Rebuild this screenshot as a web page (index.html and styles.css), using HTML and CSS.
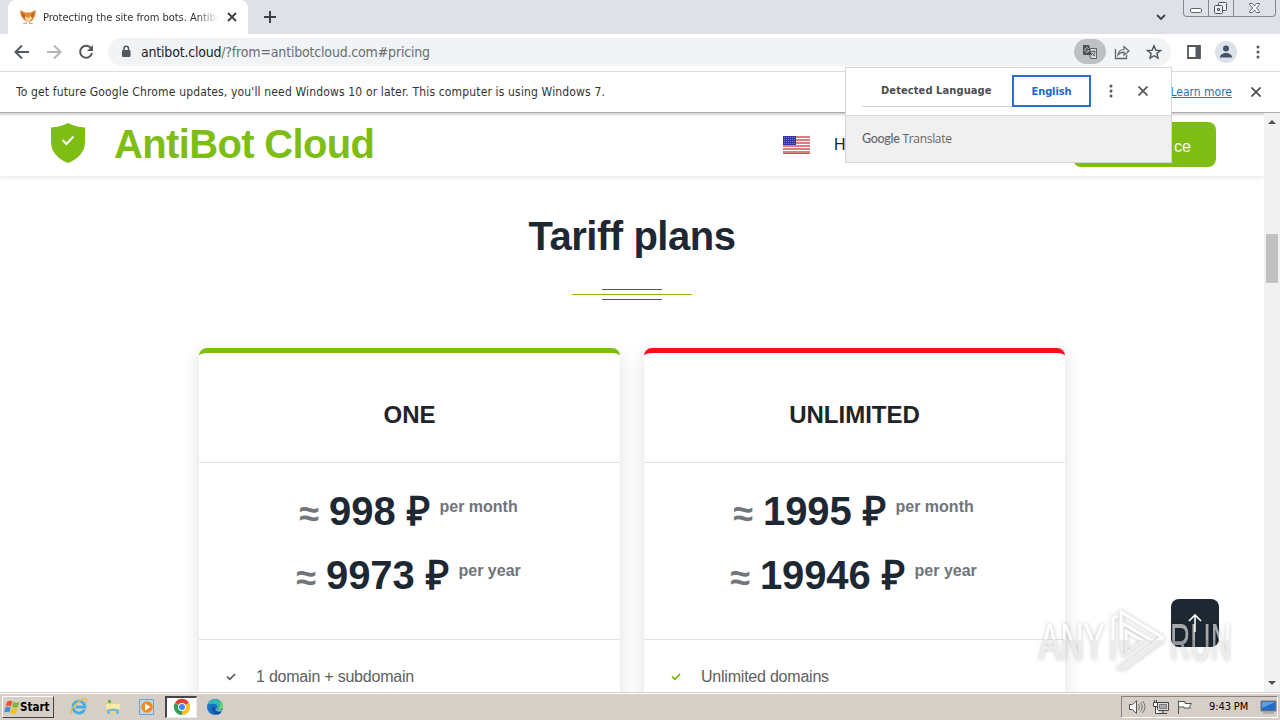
FILE: index.html
```
<!DOCTYPE html>
<html lang="en">
<head>
	<meta charset="UTF-8">
	<meta name="viewport" content="width=device-width, initial-scale=1.0">
	<title>Protecting the site from bots. Antibot Cloud</title>
	<link rel="stylesheet" href="styles.css">
</head>
<body>
	<div class="tab-strip">
		<div class="tab">
			<svg class="favicon" width="16" height="16" viewBox="0 0 16 16">
				<path d="M0 1l5 2.500h5L16 1l-1 6-3 5-4 1-4-2-3-4z" fill="#e5892f"/>
				<path d="M1 2l4 4 2 3-2 1-3-3zM15 2l-4 4-1 4 3-2z" fill="#b5642c"/>
				<path d="M5 7l3 2 3-2 1 3-4 3-3-3z" fill="#ffdc9c"/>
				<path d="M2 15l5-2v2zM9 13l5 2H9z" fill="#b8a9c6"/>
			</svg>
			<span class="tab-title">Protecting the site from bots. Antibo</span>
			<svg class="tab-close" width="10" height="10" viewBox="0 0 10 10"><path d="M1 1l8 8M9 1L1 9" stroke="#3c4043" stroke-width="1.8"/></svg>
		</div>
		<svg class="new-tab" width="12" height="12" viewBox="0 0 12 12"><path d="M6 0v12M0 6h12" stroke="#3c4043" stroke-width="2"/></svg>
		<svg class="tab-search" width="10" height="7" viewBox="0 0 10 7"><path d="M1 1l4 4 4-4" fill="none" stroke="#3c4043" stroke-width="1.8"/></svg>
		<div class="window-buttons">
			<span class="win-btn"><svg width="24" height="16" viewBox="0 0 24 16"><rect x="6.500" y="8.500" width="11" height="4" rx="1" fill="#fff" stroke="#5d636b"/></svg></span>
			<span class="win-btn"><svg width="24" height="16" viewBox="0 0 24 16"><g fill="#eef0f3" stroke="#4d535b"><rect x="9.500" y="2.500" width="8" height="8" rx="1"/><rect x="5.500" y="5.500" width="8" height="8" rx="1"/><path d="M8.500 8.500h2v2h-2z"/></g></svg></span>
			<span class="win-btn win-close"><svg width="41" height="16" viewBox="0 0 41 16"><path d="M15.500 3.500h3l2 2.500 2-2.500h3v1l-3 3.500 3 3.500v1h-3l-2-2.500-2 2.500h-3v-1l3-3.500-3-3.500z" fill="#fff" stroke="#5d636b"/></svg></span>
		</div>
	</div>

	<div class="toolbar">
		<svg class="nav-icon" width="16" height="16" viewBox="0 0 16 16"><path d="M15 8H2M8 1.500L1.500 8 8 14.500" fill="none" stroke="#55585c" stroke-width="2"/></svg>
		<svg class="nav-icon" width="16" height="16" viewBox="0 0 16 16"><path d="M1 8h13M8 1.500L14.500 8 8 14.500" fill="none" stroke="#b4b7ba" stroke-width="2"/></svg>
		<svg class="nav-icon" width="16" height="16" viewBox="0 0 16 16"><path d="M13 4.200A6 6 0 1 0 14 9" fill="none" stroke="#55585c" stroke-width="2"/><path d="M15 1v6H9z" fill="#55585c"/></svg>
		<div class="omnibox">
			<svg class="lock" width="10" height="13" viewBox="0 0 10 13"><rect x="1" y="5" width="8.500" height="7" rx="1" fill="#55585c"/><path d="M3 5.500V3.500a2.200 2.200 0 0 1 4.500 0v2" fill="none" stroke="#55585c" stroke-width="1.500"/></svg>
			<span class="url"><b class="url-host">antibot.cloud</b><span class="url-path">/?from=antibotcloud.com#pricing</span></span>
			<span class="translate-chip">
				<svg width="16" height="16" viewBox="0 0 16 16"><path d="M6.500 4.500h8v10h-6z" fill="#d2d4d5" stroke="#5f6368"/><path d="M1 1h6l3 10H2a1 1 0 0 1-1-1z" fill="#4d5155"/><path d="M6.800 4.700a2.200 2.200 0 1 0 .3 2H5.200" fill="none" stroke="#bbb"/><path d="M9.500 7.500h4M11.500 6.500v1M13 8q-1 3-2.500 4M10 9l3 3" fill="none" stroke="#5f6368"/></svg>
			</span>
			<svg class="share" width="16" height="16" viewBox="0 0 16 16"><path d="M1.500 5v9.500h11V11" fill="none" stroke="#5f6368" stroke-width="1.300"/><path d="M4 11c.5-4 2.800-5.500 6-5.500V2.500L15 7l-5 4V8.200C7.500 8.200 5.500 9 4 11z" fill="none" stroke="#5f6368" stroke-width="1.200"/></svg>
			<svg class="star" width="16" height="16" viewBox="0 0 16 16"><path d="M8 1.800l1.800 4.300 4.700.4-3.600 3 1.100 4.600L8 11.700l-4 2.400 1.100-4.600-3.600-3 4.700-.4z" fill="none" stroke="#4d5155" stroke-width="1.400"/></svg>
		</div>
		<svg class="side-panel" width="14" height="14" viewBox="0 0 14 14"><path d="M1 1h12v12H1z" fill="none" stroke="#55585c" stroke-width="1.800"/><path d="M8.500 1H13v12H8.500z" fill="#55585c"/></svg>
		<span class="avatar"><svg width="22" height="22" viewBox="0 0 22 22"><circle cx="11" cy="7.500" r="3" fill="#46506a"/><path d="M5 16.500c0-6 12-6 12 0z" fill="#46506a"/></svg></span>
		<svg class="menu-dots" width="4" height="14" viewBox="0 0 4 14"><g fill="#55585c"><circle cx="2" cy="2" r="1.500"/><circle cx="2" cy="7" r="1.500"/><circle cx="2" cy="12" r="1.500"/></g></svg>
	</div>

	<div class="infobar">
		<span class="infobar-text">To get future Google Chrome updates, you'll need Windows 10 or later. This computer is using Windows 7.</span>
		<a href="#" class="infobar-link">Learn more</a>
		<svg width="10" height="10" viewBox="0 0 10 10"><path d="M.5.500l9 9M9.500.500l-9 9" stroke="#4d5155" stroke-width="1.800"/></svg>
	</div>

	<div class="viewport">
		<div class="page">
			<div class="site-header">
				<svg class="shield" width="36" height="42" viewBox="0 0 36 42"><path d="M18 1c5 2.500 10 4 17 4.500v15C35 31 26 38 18 41 10 38 1 31 1 20.500v-15C8 5 13 3.500 18 1z" fill="#7ebd13"/><path d="M12.500 18l4 4 7-7.500" fill="none" stroke="#fff" stroke-width="2"/></svg>
				<span class="brand">AntiBot Cloud</span>
				<svg class="flag" width="27" height="18" viewBox="0 0 27 18"><path d="M0 0h27v18H0z" fill="#fff"/><path d="M0 1h27M0 4h27M0 7h27M0 10h27M0 13h27M0 16h27" stroke="#d95057" stroke-width="1.400"/><path d="M0 17.500h27" stroke="#d95057"/><path d="M0 0h13v9H0z" fill="#3333a5"/><path d="M1 1.500h12M1 3.500h12M1 5.500h12M1 7.500h12" stroke="#7878cc" stroke-dasharray="1 1"/></svg>
				<a href="#" class="nav-link">H</a>
				<a href="#" class="btn-service">ce</a>
			</div>
			<div class="pricing">
				<h2 class="section-title">Tariff plans</h2>
				<div class="title-line"><span></span><span></span><span></span></div>
				<div class="plans">
					<div class="plan">
						<h3 class="plan-name">ONE</h3>
						<div class="plan-prices">
							<div class="price"><span class="approx">≈</span><span class="amount">998 ₽</span><span class="period">per month</span></div>
							<div class="price"><span class="approx">≈</span><span class="amount">9973 ₽</span><span class="period">per year</span></div>
						</div>
						<ul class="plan-list">
							<li class="plan-item"><svg width="10" height="8" viewBox="0 0 10 8"><path d="M1 3.500L3.800 6.300 9 1" fill="none" stroke="#50575e" stroke-width="1.700"/></svg>1 domain + subdomain</li>
						</ul>
					</div>
					<div class="plan plan-red">
						<h3 class="plan-name">UNLIMITED</h3>
						<div class="plan-prices">
							<div class="price"><span class="approx">≈</span><span class="amount">1995 ₽</span><span class="period">per month</span></div>
							<div class="price"><span class="approx">≈</span><span class="amount">19946 ₽</span><span class="period">per year</span></div>
						</div>
						<ul class="plan-list">
							<li class="plan-item"><svg width="10" height="8" viewBox="0 0 10 8"><path d="M1 3.500L3.800 6.300 9 1" fill="none" stroke="#72b000" stroke-width="1.700"/></svg>Unlimited domains</li>
						</ul>
					</div>
				</div>
			</div>
		</div>
		<div class="scrollbar">
			<svg width="8" height="5" viewBox="0 0 8 5"><path d="M0 5l4-4 4 4z" fill="#505050"/></svg>
			<span class="scroll-thumb"></span>
			<svg class="scroll-down" width="8" height="5" viewBox="0 0 8 5"><path d="M0 0h8L4 4z" fill="#505050"/></svg>
		</div>
	</div>

	<div class="taskbar">
		<div class="start">
			<svg width="16" height="16" viewBox="0 0 16 16"><path d="M3 3q3-2 5.500-.5L7 7.500Q4.500 6 1.500 7.800z" fill="#e8562a"/><path d="M9.300 3q3 1.500 6 0L14 8q-3 1.500-6 0z" fill="#7cba35"/><path d="M1.200 8.800q3-1.800 5.500-.3L5.300 13.500Q3 12 0 13.500z" fill="#3f8ede"/><path d="M7.600 9q3 1.500 6 0l-1.500 5q-3 1.500-6 0z" fill="#f6bc1d"/></svg>
			<b>Start</b>
		</div>
		<div class="task"><svg width="18" height="18" viewBox="0 0 18 18"><path d="M14.500 11.500A6 6 0 1 1 15 9H6" fill="none" stroke="#42aee6" stroke-width="2.800"/><path d="M2 15Q-1 17 2 11 7 3 14 1q4-1 2 4" fill="none" stroke="#e8bb42" stroke-width="1.400"/></svg></div>
		<div class="task"><svg width="18" height="18" viewBox="0 0 18 18"><path d="M2 3h5l1 2h7v11H2z" fill="#edd27a"/><path d="M4 2h3v3H4z" fill="#5eb565"/><path d="M2 6h14v5H2z" fill="#fbeaa6"/><path d="M3 16v-4q6-3 12 0v4h-3v-3H6v3z" fill="#72b8e0"/></svg></div>
		<div class="task"><svg width="18" height="18" viewBox="0 0 18 18"><path d="M1.500 1.500h14v15h-14z" fill="#bcd8ee" stroke="#6ca2ce"/><circle cx="9" cy="9" r="5.800" fill="#f18a1c"/><path d="M7 5.500l5.500 3.500L7 12.500z" fill="#fff"/></svg></div>
		<div class="task task-active"><svg width="18" height="18" viewBox="0 0 18 18"><path d="M9 9L1.900 5A8 8 0 0 1 16 5z" fill="#e34133"/><path d="M9 9l7-4a8 8 0 0 1-7 12z" fill="#fbc116"/><path d="M9 9v8A8 8 0 0 1 1.900 5z" fill="#2fa14f"/><circle cx="9" cy="9" r="4" fill="#fff"/><circle cx="9" cy="9" r="3" fill="#4285f4"/></svg></div>
		<div class="task"><svg width="18" height="18" viewBox="0 0 18 18"><circle cx="9" cy="9" r="8" fill="#1673c7"/><path d="M1.500 7a8 8 0 0 1 15.500 1.500c0 4-5 4-6 2 1-1 1-4-2-4.500Q4 5 1.500 7z" fill="#35b9b4"/><path d="M14 3q3 2 3 5.500c0 3-3 3.500-5 3q3-3 2-8.500z" fill="#6cd35c"/><path d="M5.500 10q.5 5 6 6.500 3-.5 4.500-3-8 2-7.500-4.500-2-1-3 1z" fill="#174e9c"/><path d="M10.500 10c0 3 4 3 6 1.500-1 2-3 2-4.500 1.500-2-.6-2-2-1.500-3z" fill="#d6cfc7"/></svg></div>
		<div class="tray">
			<svg width="18" height="16" viewBox="0 0 18 16"><path d="M1.500 5.500h3l4-4v13l-4-4h-3z" fill="#fff" stroke="#555"/><path d="M10.500 5q2 3 0 6M12.500 3.500q3.500 4.500 0 9M14.500 2q5 6 0 12" fill="none" stroke="#777"/></svg>
			<svg width="18" height="16" viewBox="0 0 18 16"><path d="M5.500 3.500h11v8h-11zM8 14.500h7M11 12v2" fill="#ddd" stroke="#444"/><path d="M7.500 5.500h7v4h-7z" fill="#aaa" stroke="#777"/><path d="M1.500 3.500h4v4h-4zM2.500 1v2M4.500 1v2M3.500 8v6.500H8" fill="#fff" stroke="#444"/></svg>
			<svg width="18" height="16" viewBox="0 0 18 16"><path d="M2.500 15V1.500M3 2.500h6v2h6.500l-2 3 1 1.500H8V8H3" fill="#fff" stroke="#555"/></svg>
			<span class="clock">9:43 PM</span>
			<svg class="desktop-icon" width="17" height="14" viewBox="0 0 17 14"><path d="M1 1h15v10H1z" fill="#256cc8" stroke="#76797c"/><path d="M2 2h13L2 8z" fill="#5f9fe5"/><path d="M3 13h11" stroke="#8d8d8d"/></svg>
		</div>
	</div>

	<!-- translate popup, hangs over the toolbar and the page -->
	<div class="translate-popup">
		<div class="translate-tabs">
			<span class="lang">Detected Language</span>
			<span class="lang lang-active">English</span>
			<svg class="popup-dots" width="4" height="14" viewBox="0 0 4 14"><g fill="#55585c"><circle cx="2" cy="2" r="1.500"/><circle cx="2" cy="7" r="1.500"/><circle cx="2" cy="12" r="1.500"/></g></svg>
			<svg width="10" height="10" viewBox="0 0 10 10"><path d="M.5.500l9 9M9.500.500l-9 9" stroke="#55585c" stroke-width="1.800"/></svg>
		</div>
		<div class="translate-foot"><b>Google</b> Translate</div>
	</div>

	<a href="#" class="to-top"><svg width="14" height="20" viewBox="0 0 14 20"><path d="M7 19V2M1 8l6-6 6 6" fill="none" stroke="#fff" stroke-width="1.600"/></svg></a>

	<svg class="watermark" width="204" height="72" viewBox="0 0 204 72">
		<defs>
			<linearGradient id="fade" x1="0" y1="0" x2="0" y2="72" gradientUnits="userSpaceOnUse">
				<stop offset=".5" stop-color="#fff"/>
				<stop offset=".5" stop-color="#e2e2e2"/>
			</linearGradient>
		</defs>
		<text x="5" y="56" textLength="66" lengthAdjust="spacingAndGlyphs" fill="url(#fade)">ANY</text>
		<text x="136" y="56" textLength="61" lengthAdjust="spacingAndGlyphs" fill="url(#fade)">RUN</text>
		<path d="M79 56V14l5-2M87 44V8l41 25-41 30-4 2M128 33v4L88 66M88 48V19l31 18M92 47V27l17 10-21 15" fill="none" stroke="url(#fade)" stroke-width="3"/>
	</svg>
</body>
</html>
```
FILE: styles.css
```
*{ box-sizing: border-box;}
body{
	margin: 0; width: 1280px; height: 720px; overflow: hidden;
	display: flex; flex-direction: column; background: #fff; position: relative;
	font-family: "DejaVu Sans Condensed", "DejaVu Sans", sans-serif; font-size: 11px; color: #333;
}
svg{ display: block; flex: none;}
a{ text-decoration: none;}

/* browser */
.tab-strip{
	height: 34px; background: #dee1e8; display: flex; align-items: center; flex: none;
}
.tab{
	width: 240px; height: 34px; margin-left: 8px; padding-left: 12px; background: #fff;
	border-radius: 8px 8px 0 0; display: flex; align-items: center;
}
.tab-title{
	width: 175px; margin-left: 7px; overflow: hidden; white-space: nowrap; letter-spacing: -.02px;
	-webkit-mask-image: linear-gradient(to right, #000 88%, transparent);
	mask-image: linear-gradient(to right, #000 88%, transparent);
}
.tab-close{ margin-left: 9px;}
.new-tab{ margin-left: 16px;}
.tab-search{ margin-left: auto;}
.window-buttons{
	display: flex; align-self: flex-start; height: 17px; width: 93px; margin: 0 4px 0 17px;
	border: 1px solid #858a92; border-top: 0; border-radius: 0 0 4px 4px; overflow: hidden;
}
.win-btn{ width: 25px; border-right: 1px solid #858a92;}
.win-close{ width: 41px; border: 0;}
.toolbar{
	height: 38px; border-bottom: 1px solid #d9dadc; display: flex; align-items: center; flex: none;
	padding: 0 20px 2px 14px;
}
.nav-icon{ margin-right: 16px;}
.omnibox{
	width: 1063px; height: 28px; margin-left: -2px; padding: 0 9px 0 13px; border-radius: 14px; background: #f1f3f5;
	display: flex; align-items: center;
}
.url{ margin-left: 10px; font-size: 14px; white-space: nowrap;}
.url-host{ font-weight: normal; color: #202124; letter-spacing: -.2px;}
.url-path{ color: #6a6e73; letter-spacing: -.18px;}
.translate-chip{
	width: 32px; height: 25px; margin-left: auto; border-radius: 13px; background: #bdc1c1;
	display: flex; align-items: center; justify-content: center;
}
.share{ margin-left: 8px;}
.star{ margin-left: 16px;}
.side-panel{ margin-left: 16px;}
.avatar{ width: 22px; height: 22px; margin-left: 14px; border-radius: 50%; background: #dde1e8;}
.menu-dots{ margin-left: auto;}
.infobar{
	height: 41px; padding: 0 19px 1px 16px; display: flex; align-items: center; flex: none;
	border-bottom: 1px solid #a9abac;
}
.infobar-text{ font-size: 12px; letter-spacing: .15px; white-space: nowrap;}
.infobar-link{ margin: 0 19px 0 auto; font-size: 12px; color: #1a73c8; text-decoration: underline;}

/* site */
.viewport{
	flex: 1; min-height: 0; display: flex; overflow: hidden;
	box-shadow: inset 0 3px 2px -1px #d5d6d7;
}
.page{ width: 1264px; overflow: hidden; font-family: "Liberation Sans", Arial, sans-serif;}
.site-header{
	height: 63px; padding: 0 48px 0 50px; display: flex; align-items: center;
	box-shadow: 0 1px 5px rgba(0,0,0,.12);
}
.shield{ margin-bottom: 4px;}
.brand{ margin-left: 28px; font-size: 40px; font-weight: bold; color: #7ebd13; letter-spacing: -.65px;}
.flag{ margin: 0 0 0 auto;}
.nav-link{ width: 239px; margin: 0 0 0 24px; font-size: 16px; color: #222;}
.btn-service{
	width: 143px; height: 45px; padding-right: 25px; background: #7ebd13; border-radius: 8px;
	color: #fff; font-size: 16px; line-height: 50px; text-align: right;
}
.section-title{
	margin: 0; padding-top: 37px; font-size: 40px; line-height: 46px; text-align: center;
	color: #1e2832; letter-spacing: -.45px;
}
.title-line{ margin: 30px 0 48px; display: flex; flex-direction: column; align-items: center; gap: 4px;}
.title-line span{ width: 60px; height: 1px; background: #505763;}
.title-line span:nth-child(2){ width: 120px; background: #7ebd13;}
.plans{ display: flex; gap: 24px; justify-content: center;}
.plan{
	width: 421px; border-top: 5px solid #7ebd13; border-radius: 8px;
	background: #fff; box-shadow: 0 5px 18px rgba(0,0,0,.13);
}
.plan-red{ border-color: #fa0f17;}
.plan-name{
	height: 110px; margin: 0; padding-top: 14px; border-bottom: 1px solid #e1e2e3;
	font-size: 24px; line-height: 96px; text-align: center; color: #1e2428;
}
.plan-prices{ height: 177px; padding-top: 16px; border-bottom: 1px solid #e1e2e3;}
.price{ height: 64px; padding-right: 2px; display: flex; justify-content: center; line-height: 64px; font-weight: bold;}
.approx{ font-size: 36px; color: #727679; padding-top: 3px;}
.amount{ margin: 0 10px; font-size: 40px; color: #1e2832; letter-spacing: -.1px;}
.period{ font-size: 16px; line-height: 55px; color: #6d747b;}
.plan-list{ list-style: none; margin: 0; padding: 27px 0 60px 27px;}
.plan-item{ display: flex; align-items: center; gap: 20px; font-size: 16px; line-height: 20px; color: #5c6063; letter-spacing: -.22px;}
.scrollbar{
	width: 16px; background: #f1f1f1; display: flex; flex-direction: column; align-items: center; padding: 6px 0;
}
.scroll-thumb{ width: 12px; height: 49px; margin-top: 110px; background: #c1c1c1;}
.scroll-down{ margin-top: auto;}

/* windows taskbar */
.taskbar{
	height: 28px; background: #d6cfc7; border-top: 1px solid #d6cfc7; box-shadow: inset 0 1px #fff;
	display: flex; align-items: center; flex: none; padding: 0 2px; color: #000;
}
.start{
	width: 52px; height: 22px; margin-right: 9px; display: flex; align-items: center; padding-left: 1px; gap: 0;
	border: 1px solid #fff; border-right-color: #444; border-bottom-color: #444; font-size: 11.500px;
}
.task{ width: 32px; height: 22px; margin-right: 2px; display: flex; align-items: center; justify-content: center;}
.task-active{ background: #fff; border: 1px solid #eee; border-top: 2px solid #444; border-left: 2px solid #444;}
.tray{
	height: 22px; width: 157px; margin-left: auto; padding-left: 6px; display: flex; align-items: center; gap: 6px;
	border: 1px solid #8a857f; border-right-color: #fff; border-bottom-color: #fff;
}
.clock{ margin-left: 9px; white-space: nowrap; letter-spacing: -.1px;}
.desktop-icon{ margin-left: auto;}

/* overlays */
.translate-popup{
	position: absolute; left: 845px; top: 67px; width: 327px; height: 96px;
	border: 1px solid #d4d5d6; background: #fff;
}
.translate-tabs{ height: 48px; border-bottom: 1px solid #d9d9d9; display: flex; align-items: center; padding: 0 23px 1px 16px;}
.lang{
	width: 150px; height: 32px; border-bottom: 1px solid #ccc; padding-left: 19px;
	line-height: 32px; font-weight: bold; color: #4a4d51; white-space: nowrap; letter-spacing: .1px;
}
.lang-active{ width: 79px; padding: 0; border: 2px solid #2a6fd0; line-height: 29px; text-align: center; color: #1967d2; letter-spacing: -.1px;}
.popup-dots{ margin: 0 25px 0 auto;}
.translate-foot{ height: 46px; padding-left: 16px; background: #f0f0f0; line-height: 46px; font-family: "Open Sans", sans-serif; font-size: 12px; letter-spacing: -.3px; color: #666;}
.translate-foot b{ font-weight: 500; font-family: Lato, sans-serif; font-size: 12.500px;}
.to-top{
	position: absolute; left: 1171px; top: 599px; width: 48px; height: 48px; border-radius: 8px;
	background: #1e2832; display: flex; align-items: center; justify-content: center;
}
.watermark{
	position: absolute; left: 1034px; top: 604px; opacity: .6; filter: drop-shadow(0 0 2px rgba(0,0,0,.4));
	font-family: "Liberation Sans", Arial, sans-serif; font-size: 52px;
}
```
